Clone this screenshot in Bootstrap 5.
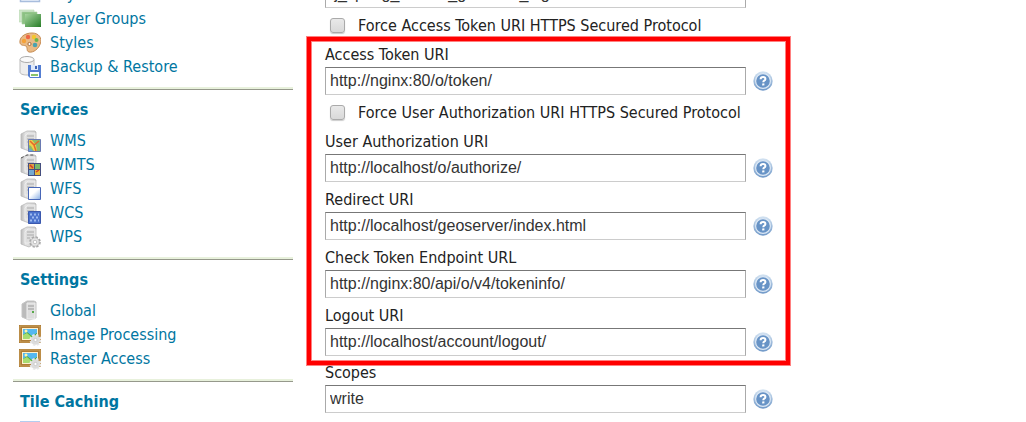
<!DOCTYPE html>
<html lang="en">
<head>
<meta charset="utf-8">
<meta name="viewport" content="width=device-width, initial-scale=1">
<title>GeoServer: OAuth2 settings</title>
<link href="https://cdn.jsdelivr.net/npm/bootstrap@5.3.0/dist/css/bootstrap.min.css" rel="stylesheet">
<style>
  body { font-family: "DejaVu Sans Condensed", "DejaVu Sans", sans-serif; font-size: 16px; line-height: 24px; color: #222; background: #fff; }
  .viewport { height: 100vh; overflow: hidden; }
  .scrolled { margin-top: -20px; }
  .side { width: 280px; margin-left: 13px; margin-right: 32px; }
  .side section { padding: 8px 6px 10px; border-bottom: 1px solid #96998c; box-shadow: inset 0 -2px #e8f1dc; }
  .side section:first-child { padding-top: 3px; }
  .side h2 { font-size: 16px; line-height: 24px; font-weight: 700; color: #0076a1; margin: 0 0 7px 1px; }
  .side a { color: #0076a1; text-decoration: none; height: 24px; gap: 9px; }
  .side svg { width: 22px; height: 22px; flex: none; }
  .settings { width: 100%; max-width: 461px; }
  .entry { margin-bottom: 6px; }
  .entry label { display: block; height: 24px; }
  .entry input { height: 28px; border: 1px solid #ccc; border-top-color: #777; border-left-color: #aaa; border-right-color: #aaa; border-radius: 0; padding: 0 4px; font: 16px "Liberation Sans", sans-serif; color: #333; min-width: 0; background: #fff; }
  .entry .btn { width: 20px; height: 20px; margin: 0 13px 0 7px; flex: none; }
  .tick { height: 24px; margin-bottom: 5px; padding-left: 5px; gap: 13px; }
  .tick input { appearance: none; width: 15px; height: 15px; margin: 0 0 2px; border: 1px solid #aaa; border-radius: 3px; background: linear-gradient(#e9e9e9, #d9d9d9); box-shadow: 0 1px 1px #ccc; }
  .tick input:checked { background: #0076a1; }
  .framed { margin: -6px -4px -4px -18px; padding: 2px 0 5px 14px; border: 4px solid #f00; box-shadow: 0 0 0 1px #ff8080, inset 0 0 0 1px #ff8080; }
  .framed .entry:last-child { margin-bottom: 0; }
</style>
</head>
<body>
<svg width="0" height="0" class="position-absolute" aria-hidden="true">
  <defs>
    <linearGradient id="gGreen" x2="1" y2="1"><stop stop-color="#a8d5a0"/><stop offset="1" stop-color="#277d27"/></linearGradient>
    <linearGradient id="gGrey"><stop stop-color="#bbb"/><stop offset=".3" stop-color="#e4e4e4"/><stop offset="1" stop-color="#c9c9c9"/></linearGradient>
    <linearGradient id="gBlue" y2="1" x2="0"><stop stop-color="#d5e4f2"/><stop offset="1" stop-color="#6f98c8"/></linearGradient>
    <linearGradient id="gFade" x2="1" y2="1"><stop offset=".4" stop-color="#fff"/><stop offset="1" stop-color="#8fb3e6"/></linearGradient>
  </defs>
  <symbol id="server" viewBox="0 0 22 22">
    <path d="M2 4 8 1h8l1 1v15l-7 4-8-3z" fill="url(#gGrey)" stroke="#b9b9b9" stroke-width=".8"/>
    <path d="M6 6 9 3h7v14H6z" fill="#dedede" stroke="#f4f4f4" stroke-width=".7"/>
    <path d="M8 6h7M8 9h7M8 12h3" stroke="#aaa" stroke-width="1.200"/>
  </symbol>
  <symbol id="picture" viewBox="0 0 22 22">
    <path d="M0 1h22v18H0z" fill="#ae7c36"/><path d="M1 2h20v16H1z" fill="none" stroke="#c99e5b"/>
    <path d="M3 4h16v12H3z" fill="#fff1cd"/><path d="M4 5h14v10H4z" fill="#55b8f1"/>
    <path d="M4 11l4-3 5 4 5-3v6H4z" fill="#51ae39"/><path d="M4 11l4-2 7 6H4z" fill="#a7dc72"/><circle cx="7" cy="7" r="1.5" fill="#fff6a7"/>
    <circle cx="16.500" cy="16" r="4.600" fill="#e3e3e3" stroke="#e9e9e9" stroke-width="2.800" stroke-dasharray="2.200 1.410"/>
    <circle cx="16.500" cy="16" r="4.500" fill="#dcdcdc"/><circle cx="16.500" cy="16" r="1.600" fill="#fff" stroke="#bbb" stroke-width=".6"/>
  </symbol>
  <symbol id="layer" viewBox="0 0 22 22"><path d="M1.500 1.500h19v16h-19z" fill="#edf3fb" stroke="#a8bddd" stroke-width="1.500"/></symbol>
  <symbol id="tiles" viewBox="0 0 22 22"><path d="M1 0h20v20H1z" fill="#b3cdf0"/><path d="M3 3h7v7H3zM12 3h7v7h-7zM3 12h7v7H3zM12 12h7v7h-7z" fill="#e3edfa"/></symbol>
  <symbol id="help" viewBox="0 0 20 20">
    <circle cx="10" cy="10" r="9.700" fill="url(#gBlue)"/><circle cx="10" cy="10" r="7.400" fill="#6793c6" stroke="#dce8f5" stroke-width="1.200"/>
    <path d="M7.600 8.200q0-2.200 2.500-2.200 2.300 0 2.300 1.900 0 1-1.200 1.700-.9.500-.9 1.700" fill="none" stroke="#fff" stroke-width="2"/><path d="M9.200 12.400h2.200v2H9.200z" fill="#fff"/>
  </symbol>
</svg>

<div class="viewport">
<div class="d-flex scrolled">
  <nav class="side flex-shrink-0" aria-label="Administration">
    <section>
      <a href="#" class="d-flex align-items-center"><svg><use href="#layer"/></svg>Layers</a>
      <a href="#" class="d-flex align-items-center"><svg viewBox="0 0 22 22"><path d="M0 2h15v12H0z" fill="#cfe6ca" stroke="#b8d8b2" stroke-width=".6"/><path d="M3 4h15v12H3z" fill="#8cc183" stroke="#a7d19f" stroke-width=".6"/><path d="M6 6h16v13H6z" fill="url(#gGreen)"/></svg>Layer Groups</a>
      <a href="#" class="d-flex align-items-center"><svg viewBox="0 0 22 22"><path d="M1 11C0 5 6 1 13 1s10 5 8.500 10C20 17 14 21 10 20c-3-1-1-4-3-6-2-1-5 0-6-3z" fill="#e9ba85" stroke="#c68c54"/><circle cx="5" cy="9" r="2.200" fill="#f5a238"/><circle cx="9" cy="5" r="2.200" fill="#ee6645"/><circle cx="15" cy="5" r="2.200" fill="#f3c62c"/><circle cx="17.500" cy="8" r="2" fill="#69b44c"/><circle cx="16" cy="13" r="2.300" fill="#4aa2af"/><circle cx="10.500" cy="12" r="1.600" fill="#fff" stroke="#a56d3d"/></svg>Styles</a>
      <a href="#" class="d-flex align-items-center"><svg viewBox="0 0 22 22"><path d="M1 4v12c0 2 3 3 7 3s7-1 7-3V4" fill="#eee" stroke="#bbb"/><ellipse cx="8" cy="3.500" rx="7" ry="3" fill="#fafafa" stroke="#aaa"/><path d="M9 9h13v13H11l-2-2z" fill="#557fd3"/><path d="M12 9h7v5h-7z" fill="#dfe9fa"/><path d="M16 10h2v3h-2z" fill="#3d62b5"/><path d="M11 16h9v5h-9z" fill="#fff"/><path d="M12 18h7v2h-7z" fill="#8bc46b"/></svg>Backup &amp; Restore</a>
    </section>
    <section>
      <h2>Services</h2>
      <a href="#" class="d-flex align-items-center"><svg viewBox="0 0 22 22"><use href="#server"/><path d="M9.500 9.500h12v12h-12z" fill="#8dbb68" stroke="#6a7ab2"/><path d="M10 10h3l4 5 1 6h-3l-3-5-2-1z" fill="#f1d04a"/><path d="m11 11 4 4 2 6m-2-6 5-4" fill="none" stroke="#e3682d" stroke-width="1.500"/><path d="M10 18l4 3h-4z" fill="#69a6da"/></svg>WMS</a>
      <a href="#" class="d-flex align-items-center"><svg viewBox="0 0 22 22"><use href="#server"/><path d="M2 4 8 1h7" stroke="#555" fill="none" stroke-dasharray="3 2"/><path d="M9 9h13v13H9z" fill="#454f7f"/><path d="M10 10h5v5h-5z" fill="#dfa144"/><path d="M16 10h5v5h-5z" fill="#79b869"/><path d="M10 16h5v5h-5z" fill="#75a9d0"/><path d="M16 16h5v5h-5z" fill="#e5ba3d"/><path d="m11 11 3 3m3 4 3-2" stroke="#d43c28" stroke-width="1.500"/></svg>WMTS</a>
      <a href="#" class="d-flex align-items-center"><svg viewBox="0 0 22 22"><use href="#server"/><path d="M9.500 9.500h12v12h-12z" fill="#fff" stroke="#4867b7"/><path d="M10 21c1-6 5-9 11-10v10z" fill="url(#gFade)"/></svg>WFS</a>
      <a href="#" class="d-flex align-items-center"><svg viewBox="0 0 22 22"><use href="#server"/><path d="M9.500 9.500h12v12h-12z" fill="#4c74cd" stroke="#3b58ad"/><path d="M11 12.500h9M11 18.500h9" stroke="#9fbcf1" stroke-width="2" stroke-dasharray="2 2"/><path d="M13 15.500h7" stroke="#9fbcf1" stroke-width="2" stroke-dasharray="2 2"/></svg>WCS</a>
      <a href="#" class="d-flex align-items-center"><svg viewBox="0 0 22 22"><use href="#server"/><circle cx="16" cy="16" r="4.700" fill="#eee" stroke="#aaa" stroke-width="2.300" stroke-dasharray="2.200 1.490"/><circle cx="16" cy="16" r="4.200" fill="#e6e6e6" stroke="#aaa" stroke-width=".6"/><circle cx="16" cy="16" r="1.800" fill="#fff" stroke="#aaa" stroke-width=".7"/></svg>WPS</a>
    </section>
    <section>
      <h2>Settings</h2>
      <a href="#" class="d-flex align-items-center"><svg viewBox="0 0 22 22"><path d="M3 4 8 1h7l2 1v16l-7 2-7-3z" fill="#bbb" stroke="#c4c4c4"/><path d="M8 3h8v16H8z" fill="#ddd" stroke="#eee"/><path d="M9 6h6M9 9h6" stroke="#999" stroke-width="1.200"/><path d="M13 11h2v2h-2z" fill="#58a94a"/></svg>Global</a>
      <a href="#" class="d-flex align-items-center"><svg><use href="#picture"/></svg>Image Processing</a>
      <a href="#" class="d-flex align-items-center"><svg><use href="#picture"/></svg>Raster Access</a>
    </section>
    <section>
      <h2>Tile Caching</h2>
      <a href="#" class="d-flex align-items-start" aria-label="Tile caching"><svg><use href="#tiles"/></svg></a>
    </section>
  </nav>

  <main class="flex-grow-1">
    <form class="settings">
      <div class="entry d-flex align-items-center"><input class="form-control" aria-label="Logout processing filter" value="/j_spring_oauth2_geonode_logout"><button type="button" class="btn p-0 border-0 invisible" aria-label="Help"></button></div>
      <div class="tick d-flex align-items-center"><input type="checkbox" id="forceToken"><label for="forceToken">Force Access Token URI HTTPS Secured Protocol</label></div>
      <div class="framed">
        <div class="entry"><label for="tokenUri">Access Token URI</label><div class="d-flex align-items-center"><input class="form-control" id="tokenUri" value="http://nginx:80/o/token/"><button type="button" class="btn p-0 border-0 d-flex" aria-label="Help"><svg width="20" height="20"><use href="#help"/></svg></button></div></div>
        <div class="tick d-flex align-items-center"><input type="checkbox" id="forceAuth"><label for="forceAuth">Force User Authorization URI HTTPS Secured Protocol</label></div>
        <div class="entry"><label for="authUri">User Authorization URI</label><div class="d-flex align-items-center"><input class="form-control" id="authUri" value="http://localhost/o/authorize/"><button type="button" class="btn p-0 border-0 d-flex" aria-label="Help"><svg width="20" height="20"><use href="#help"/></svg></button></div></div>
        <div class="entry"><label for="redirectUri">Redirect URI</label><div class="d-flex align-items-center"><input class="form-control" id="redirectUri" value="http://localhost/geoserver/index.html"><button type="button" class="btn p-0 border-0 d-flex" aria-label="Help"><svg width="20" height="20"><use href="#help"/></svg></button></div></div>
        <div class="entry"><label for="checkUrl">Check Token Endpoint URL</label><div class="d-flex align-items-center"><input class="form-control" id="checkUrl" value="http://nginx:80/api/o/v4/tokeninfo/"><button type="button" class="btn p-0 border-0 d-flex" aria-label="Help"><svg width="20" height="20"><use href="#help"/></svg></button></div></div>
        <div class="entry"><label for="logoutUri">Logout URI</label><div class="d-flex align-items-center"><input class="form-control" id="logoutUri" value="http://localhost/account/logout/"><button type="button" class="btn p-0 border-0 d-flex" aria-label="Help"><svg width="20" height="20"><use href="#help"/></svg></button></div></div>
      </div>
      <div class="entry"><label for="scopes">Scopes</label><div class="d-flex align-items-center"><input class="form-control" id="scopes" value="write"><button type="button" class="btn p-0 border-0 d-flex" aria-label="Help"><svg width="20" height="20"><use href="#help"/></svg></button></div></div>
    </form>
  </main>
</div>
</div>
</body>
</html>
